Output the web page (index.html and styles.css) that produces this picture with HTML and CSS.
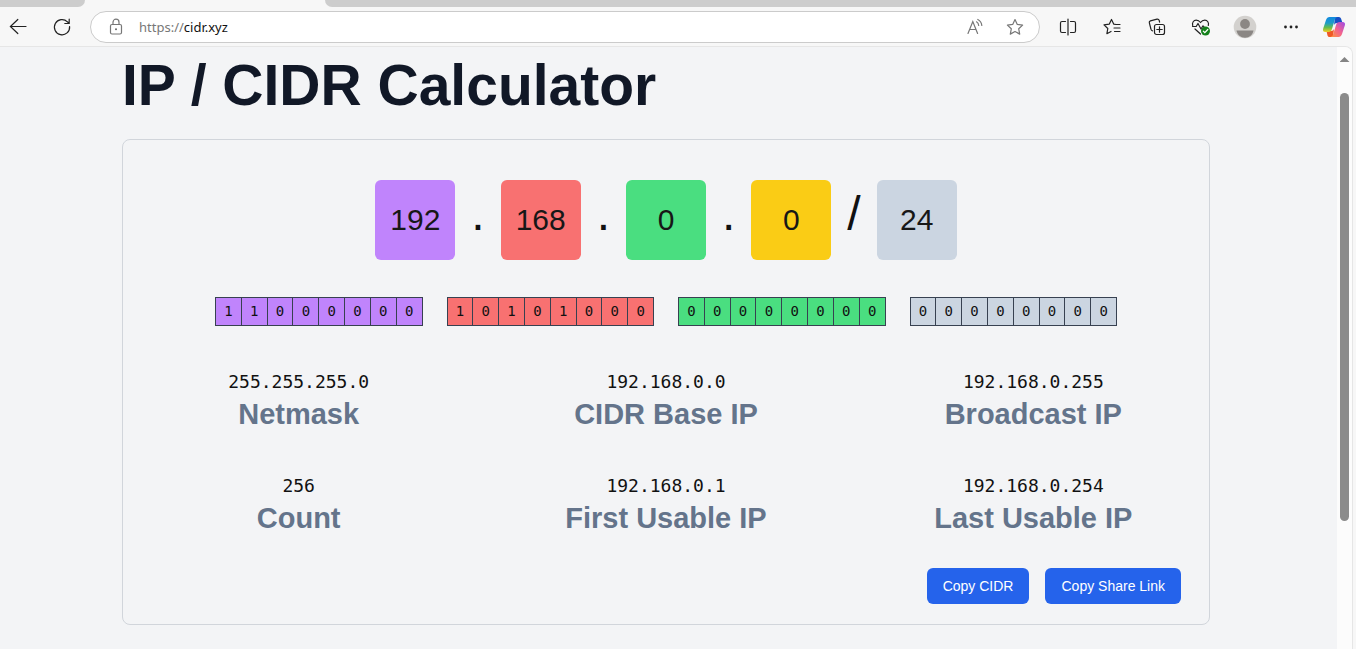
FILE: index.html
```html
<!DOCTYPE html>
<html lang="en">
<head>
<meta charset="utf-8">
<meta name="viewport" content="width=device-width, initial-scale=1">
<title>IP / CIDR Calculator</title>
<link rel="stylesheet" href="styles.css">
</head>
<body>
<div class="tabstrip"><span class="tab-left"></span><span class="tab-active"></span><span class="tab-right"></span></div>
<header class="toolbar">
  <div class="nav">
    <button type="button" class="icon-btn" aria-label="Back"><svg width="20" height="20" viewBox="0 0 20 20"><path d="M18 9.5H2.4M9.8 2.5L2.4 9.5l7.4 7"/></svg></button>
    <button type="button" class="icon-btn" aria-label="Reload"><svg width="20" height="20" viewBox="0 0 20 20"><path d="M17.600 9.500A7.600 7.600 0 1 1 15.400 4.800L17 6.300M17.200 2.200V6.500H12.800"/></svg></button>
  </div>
  <div class="address">
    <svg class="lock" width="16" height="18" viewBox="0 0 16 18"><rect x="2.5" y="6.5" width="11" height="9.5" rx="1.5"/><path d="M5 6.500V4.200a3 3 0 0 1 6 0V6.500"/><circle cx="8" cy="11.200" r="1" fill="#666" stroke="none"/></svg>
    <div class="url"><span class="scheme">https://</span>cidr.xyz</div>
    <button type="button" class="field-btn" aria-label="Read aloud"><svg width="20" height="20" viewBox="0 0 20 20"><path d="M3 16.500L7.800 4.500 12.600 16.500M4.700 12.500H11M11.500 4.800Q13.500 6 13.700 8.500M12.800 2.500Q16.500 4.500 16.800 8.500"/></svg></button>
    <button type="button" class="field-btn" aria-label="Add to favorites"><svg width="20" height="20" viewBox="0 0 20 20"><path stroke-linejoin="round" d="M10 2.500l2.300 4.900 5.300.7-3.900 3.700 1 5.300-4.700-2.600-4.700 2.600 1-5.300L2.400 8.100l5.300-.7z"/></svg></button>
  </div>
  <div class="actions">
    <button type="button" class="icon-btn" aria-label="Split screen"><svg width="20" height="20" viewBox="0 0 20 20"><path d="M7.500 4.500H4Q2.500 4.500 2.500 6V14Q2.500 15.500 4 15.500H7.500M12.500 4.500H16Q17.500 4.500 17.500 6V14Q17.500 15.500 16 15.500H12.500M10 2V18"/></svg></button>
    <button type="button" class="icon-btn" aria-label="Favorites"><svg width="20" height="20" viewBox="0 0 20 20"><path stroke-linejoin="round" d="M14 7.500L11.800 7.200 9.500 2.500 7.200 7.200 2 7.900 5.800 11.500 4.900 16.700 9 14.500M12.500 7.500H18M12 11H18M12.500 14.500H18"/></svg></button>
    <button type="button" class="icon-btn" aria-label="Collections"><svg width="20" height="20" viewBox="0 0 20 20"><rect x="7.500" y="7.500" width="10" height="10" rx="2"/><path d="M12.500 9.800V15.200M9.800 12.500H15.200M5.500 13.800Q4.200 13.500 3.900 12L2.300 5.600Q2 4.200 3.400 3.800L10 2.100Q11.700 1.800 12.200 3.400L12.600 5.200"/></svg></button>
    <button type="button" class="icon-btn" aria-label="Browser essentials"><svg width="20" height="20" viewBox="0 0 20 20"><path stroke-linejoin="round" d="M1.700 8.500C.8 5.500 2.700 3.200 5.200 3.200 7.200 3.200 8.600 4.300 9.500 5.500 10.400 4.300 11.800 3.200 13.800 3.200 16.300 3.200 18.200 5.500 17.300 8.500M1.500 9.500H5.200L7 6.500 10 12 12 8.800 13 9.800M4 12L9.500 17"/><circle cx="14.500" cy="14" r="4.500" fill="#13801a" stroke="none"/><path d="M12.300 14.200l1.500 1.500 3-3.200" stroke="#fff"/></svg></button>
    <button type="button" class="icon-btn" aria-label="Profile"><svg width="24" height="24" viewBox="0 0 24 24"><g stroke="none"><circle cx="12" cy="12" r="11.300" fill="#d3d1ce"/><circle cx="12" cy="9" r="4.900" fill="#8b8784"/><path fill="#8b8784" d="M3.500 15.500H20.500C19.700 20 16.500 22.700 12 22.700S4.300 20 3.500 15.500z"/></g></svg></button>
    <button type="button" class="icon-btn" aria-label="More"><svg width="20" height="20" viewBox="0 0 20 20"><g fill="#222" stroke="none"><circle cx="5.500" cy="10" r="1.400"/><circle cx="11" cy="10" r="1.400"/><circle cx="16.500" cy="10" r="1.400"/></g></svg></button>
    <button type="button" class="icon-btn" aria-label="Copilot"><svg width="24" height="24" viewBox="0 0 24 24">
      <defs>
        <linearGradient id="cool" x1="0" y1="0" x2="0" y2="1"><stop offset="0" stop-color="#1289e0"/><stop offset=".4" stop-color="#1d9cc8"/><stop offset=".7" stop-color="#65bd4b"/><stop offset="1" stop-color="#f4cd25"/></linearGradient>
        <linearGradient id="warm" x1="1" y1="0" x2="0" y2="1"><stop offset="0" stop-color="#9b4be8"/><stop offset=".5" stop-color="#f2628f"/><stop offset="1" stop-color="#ff983c"/></linearGradient>
      </defs>
      <g stroke="none"><path fill="#174fc4" d="M13 2h4q1.500 0 2 1.500L20.500 8H15q-2.500 0-3 2z"/><path fill="#ef5926" d="M11 22H7.500Q6 22 5.500 20.500L4.500 16H9q2.500 0 3-2z"/><path fill="url(#cool)" d="M7.500 2h8Q13.500 2 12.700 5L10 14q-.8 3-3.500 3H3.500Q.2 17 1.200 13.500L4 5Q5 2 7.500 2z"/><path fill="url(#warm)" d="M16.500 22h-8q2 0 2.800-3L14 10q.8-3 3.500-3h3Q23.800 7 22.800 10.500L20 19q-1 3-3.500 3z"/></g></svg></button>
  </div>
</header>
<div class="viewport">
  <main class="page">
    <h1 class="title">IP / CIDR Calculator</h1>
    <section class="card">
      <div class="octets">
        <input class="octet purple" type="text" aria-label="First octet" value="192"><span class="sep">.</span>
        <input class="octet red" type="text" aria-label="Second octet" value="168"><span class="sep">.</span>
        <input class="octet green" type="text" aria-label="Third octet" value="0"><span class="sep">.</span>
        <input class="octet yellow" type="text" aria-label="Fourth octet" value="0"><span class="sep">/</span>
        <input class="octet slate" type="text" aria-label="Prefix length" value="24">
      </div>
      <div class="bits">
        <div class="byte purple"><span>1</span><span>1</span><span>0</span><span>0</span><span>0</span><span>0</span><span>0</span><span>0</span></div>
        <div class="byte red"><span>1</span><span>0</span><span>1</span><span>0</span><span>1</span><span>0</span><span>0</span><span>0</span></div>
        <div class="byte green"><span>0</span><span>0</span><span>0</span><span>0</span><span>0</span><span>0</span><span>0</span><span>0</span></div>
        <div class="byte slate"><span>0</span><span>0</span><span>0</span><span>0</span><span>0</span><span>0</span><span>0</span><span>0</span></div>
      </div>
      <div class="stats">
        <div class="stat"><div class="value">255.255.255.0</div><h2 class="label">Netmask</h2></div>
        <div class="stat"><div class="value">192.168.0.0</div><h2 class="label">CIDR Base IP</h2></div>
        <div class="stat"><div class="value">192.168.0.255</div><h2 class="label">Broadcast IP</h2></div>
        <div class="stat"><div class="value">256</div><h2 class="label">Count</h2></div>
        <div class="stat"><div class="value">192.168.0.1</div><h2 class="label">First Usable IP</h2></div>
        <div class="stat"><div class="value">192.168.0.254</div><h2 class="label">Last Usable IP</h2></div>
      </div>
      <div class="buttons"><button type="button" class="copy">Copy CIDR</button><button type="button" class="copy">Copy Share Link</button></div>
    </section>
  </main>
  <div class="scrollbar"><span class="arrow"></span><span class="thumb"></span><span class="track"></span></div>
</div>
</body>
</html>
```
FILE: styles.css
```css
* { box-sizing: border-box; }
body {
  margin: 0;
  min-height: 100vh;
  display: flex;
  flex-direction: column;
  background: #f7f7f7;
  color: #111;
  font-family: "Liberation Sans", Arial, sans-serif;
}
button { font: inherit; border: 0; padding: 0; background: none; }

/* browser chrome */
.tabstrip { display: flex; height: 7px; background: #f7f7f7; }
.tab-left { width: 85px; background: #cdcdcd; border-bottom-right-radius: 7px; }
.tab-active { width: 240px; }
.tab-right { flex: 1; background: #cdcdcd; border-bottom-left-radius: 7px; }
.toolbar { display: flex; align-items: center; height: 39px; }
.toolbar svg { display: block; fill: none; stroke: #222; stroke-width: 1.2; stroke-linecap: round; }
.nav { display: flex; width: 90px; padding-right: 6px; }
.icon-btn { width: 44px; height: 32px; display: flex; align-items: center; justify-content: center; }
.nav .icon-btn { flex: none; }
.nav .icon-btn:first-child { width: 36px; }
.nav .icon-btn:last-child { width: 52px; }
.address {
  flex: 1;
  display: flex;
  align-items: center;
  height: 32px;
  padding: 0 14px 0 17px;
  border: 1px solid #cbcbcb;
  border-radius: 16px;
  background: #fff;
}
.toolbar .address svg { stroke: #777; }
.url { flex: 1; margin-left: 15px; font: 13px/20px "Noto Sans", "Open Sans", sans-serif; color: #111; }
.scheme { color: #777; }
.field-btn { margin-left: 20px; }
.actions { display: flex; justify-content: space-between; width: 316px; padding-left: 6px; }

.viewport {
  flex: 1;
  display: flex;
  margin-right: 3px;
  border: 1px solid #e6e6e6;
  border-width: 1px 1px 0 0;
  border-top-right-radius: 8px;
  background: #f3f4f6;
  overflow: hidden;
}
.scrollbar { width: 15px; padding-top: 10px; display: flex; flex-direction: column; align-items: center; background: #fcfcfc; }
.arrow { width: 10px; height: 5px; margin-bottom: 31px; background: #858585; clip-path: polygon(50% 0, 100% 100%, 0 100%); }
.thumb { width: 9px; flex: 428; border-radius: 5px; background: #8b8b8b; }
.track { flex: 128; }

/* calculator */
.page { flex: 1; padding: 8px 127px 24px 122px; }
.title { margin: 0 0 24px; font-size: 57px; line-height: 60px; font-weight: 700; color: #111827; }
.card { border: 1px solid #d1d5db; border-radius: 8px; padding: 40px 0 20px; }
.octets { display: flex; justify-content: center; gap: 16px; }
.octet {
  width: 80px;
  height: 80px;
  padding: 0;
  border: 0;
  border-radius: 6px;
  text-align: center;
  font: 30px/36px "Liberation Sans", Arial, sans-serif;
  color: #171717;
}
.sep { font-size: 48px; line-height: 68px; }
.purple { background: #c084fc; }
.red { background: #f87171; }
.green { background: #4ade80; }
.yellow { background: #facc15; }
.slate { background: #cbd5e1; }
.bits { display: grid; grid-template-columns: repeat(4, 1fr); gap: 24px; max-width: 902px; margin: 37px auto 42px; }
.byte { display: flex; border: 1px solid #374151; font: 14px/27px "DejaVu Sans Mono", monospace; text-align: center; }
.byte span { flex: 1; }
.byte span + span { border-left: 1px solid #374151; }
.stats { display: grid; grid-template-columns: repeat(3, 1fr); gap: 40px 16px; text-align: center; }
.value { font: 18px/28px "DejaVu Sans Mono", monospace; }
.label { margin: 0; font-size: 29px; line-height: 36px; font-weight: 700; color: #64748b; }
.buttons { display: flex; justify-content: flex-end; gap: 16px; margin-top: 32px; padding-right: 28px; }
.copy { height: 36px; padding: 0 16px; border-radius: 6px; background: #2563eb; color: #fff; font-size: 14px; line-height: 20px; }
```
